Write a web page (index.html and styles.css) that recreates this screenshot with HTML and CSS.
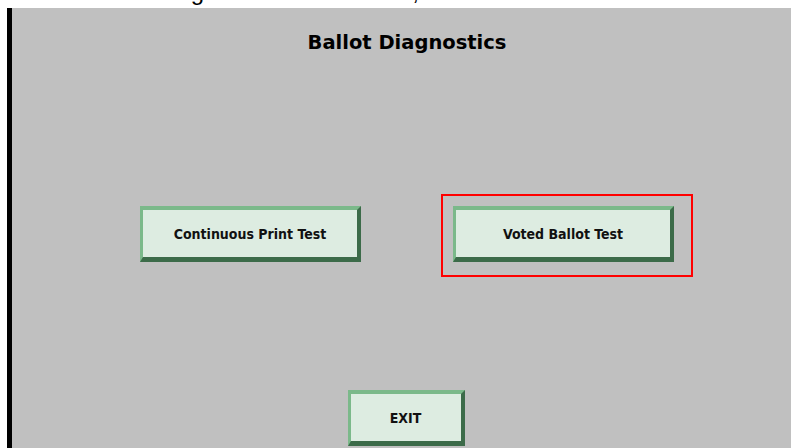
FILE: index.html
```html
<!DOCTYPE html>
<html lang="en">
<head>
  <meta charset="UTF-8" />
  <title>Ballot Diagnostics</title>
  <link rel="stylesheet" href="styles.css">
</head>
<body>
  <div class="doc-line"><span>The Ballot Diagnostics screen here, and</span></div>

  <div class="screen">
    <h1 class="title">Ballot Diagnostics</h1>

    <div class="test-row">
      <button class="panel-btn wide">Continuous Print Test</button>
      <div class="highlight">
        <button class="panel-btn wide">Voted Ballot Test</button>
      </div>
    </div>

    <button class="panel-btn exit">EXIT</button>
  </div>
</body>
</html>
```

FILE: styles.css
```css
html, body { margin: 0; height: 100%; overflow: hidden; }
body { background: #fff; font-family: "DejaVu Sans", Verdana, sans-serif; }

/* tail of the manual text above the screenshot */
.doc-line { height: 8px; overflow: hidden; padding-left: 40px; }
.doc-line span {
  display: block;
  margin-top: -20px;
  font-family: "Liberation Sans", Arial, sans-serif;
  font-size: 24px;
  line-height: 24px;
  white-space: nowrap;
  color: #000;
}

.screen {
  margin-left: 7px;
  border-left: 5px solid #000;
  background: #c0c0c0;
  height: 440px;
  padding: 23px 0 0 11px;
  display: flex;
  flex-direction: column;
  align-items: center;
  box-sizing: border-box;
}

.title {
  margin: 0;
  font-size: 19.5px;
  line-height: 24px;
  font-weight: bold;
  color: #000;
}

.test-row {
  display: flex;
  gap: 92px;
  margin-top: 151px;
}

.panel-btn {
  box-sizing: border-box;
  height: 56px;
  background: #ddece1;
  border-style: solid;
  border-width: 4px 4px 5px 3px;
  border-color: #7bb98a #3c6b49 #3c6b49 #7bb98a;
  font-family: "DejaVu Sans Condensed", "DejaVu Sans", sans-serif;
  font-size: 14px;
  font-weight: bold;
  color: #111;
  padding: 0;
  display: flex;
  align-items: center;
  justify-content: center;
}
.panel-btn.wide { width: 221px; }
.panel-btn.exit { width: 117px; margin: 128px 2px 0 0; }

.highlight { position: relative; }
.highlight::after {
  content: "";
  position: absolute;
  top: -12px; left: -12px; right: -19px; bottom: -15px;
  border: 2px solid #f00;
  pointer-events: none;
}
```
